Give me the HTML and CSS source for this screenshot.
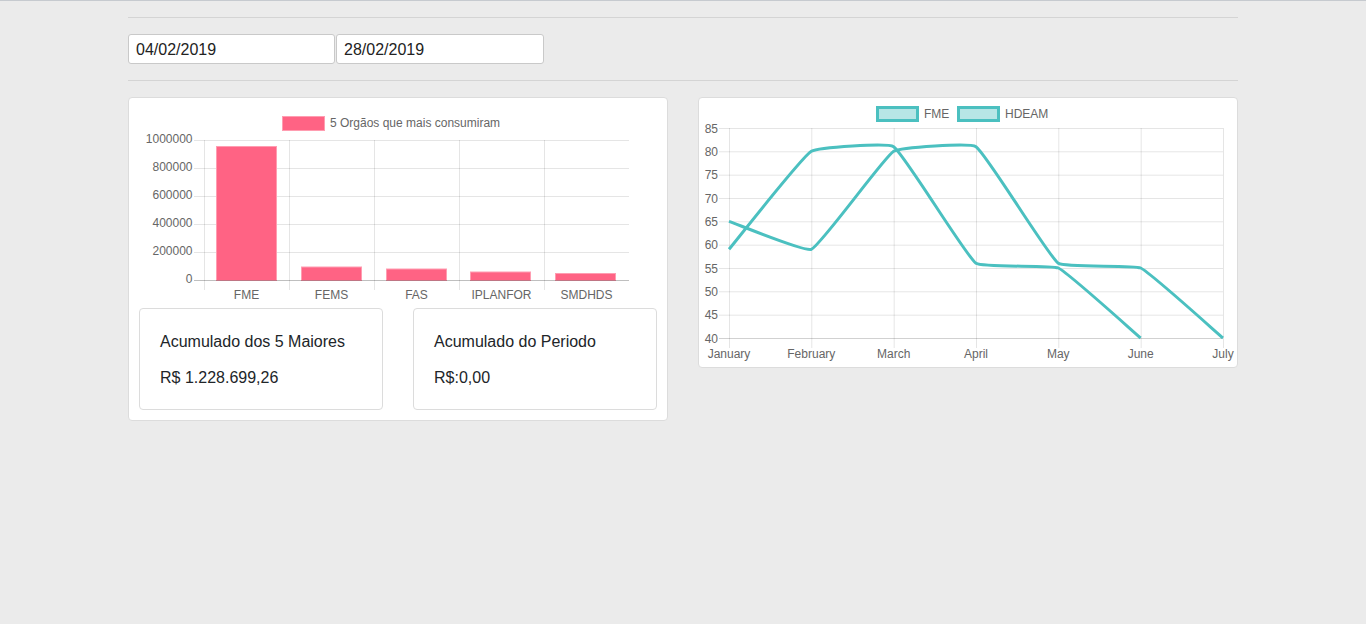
FILE: index.html
```html
<!DOCTYPE html>
<html lang="pt-BR">
<head>
<meta charset="utf-8">
<title>Painel de Consumo</title>
<link rel="stylesheet" href="styles.css">
</head>
<body>
<div class="container">
  <hr class="sep">
  <div class="dates">
    <input class="date-input" type="text" value="04/02/2019">
    <input class="date-input date-input-wide" type="text" value="28/02/2019">
  </div>
  <hr class="sep">
  <div class="row">
    <div class="panel panel-left">
      <svg class="bar-chart" width="518" height="200" viewBox="139 108 518 200" xmlns="http://www.w3.org/2000/svg">
        <rect x="282.5" y="116.5" width="42" height="14" class="bar-legend"/>
        <text x="330" y="123" class="chart-text">5 Orgãos que mais consumiram</text>

        <g class="grid">
          <line x1="194" y1="140.5" x2="629" y2="140.5"/>
          <line x1="194" y1="168.5" x2="629" y2="168.5"/>
          <line x1="194" y1="196.5" x2="629" y2="196.5"/>
          <line x1="194" y1="224.5" x2="629" y2="224.5"/>
          <line x1="194" y1="252.5" x2="629" y2="252.5"/>
          <line x1="204.5" y1="140" x2="204.5" y2="290"/>
          <line x1="289.5" y1="140" x2="289.5" y2="290"/>
          <line x1="374.5" y1="140" x2="374.5" y2="290"/>
          <line x1="459.5" y1="140" x2="459.5" y2="290"/>
          <line x1="544.5" y1="140" x2="544.5" y2="290"/>
        </g>

        <g class="y-labels">
          <text x="192.5" y="138.5" class="chart-text">1000000</text>
          <text x="192.5" y="166.5" class="chart-text">800000</text>
          <text x="192.5" y="194.5" class="chart-text">600000</text>
          <text x="192.5" y="222.5" class="chart-text">400000</text>
          <text x="192.5" y="250.5" class="chart-text">200000</text>
          <text x="192.5" y="279" class="chart-text">0</text>
        </g>

        <g class="bars">
          <rect x="216.5" y="146.5" width="60" height="134"/>
          <rect x="301.5" y="267" width="60" height="13.5"/>
          <rect x="386.5" y="269" width="60" height="11.5"/>
          <rect x="470.5" y="272" width="60" height="8.5"/>
          <rect x="555.5" y="273.5" width="60" height="7"/>
        </g>

        <line x1="194" y1="280.5" x2="629" y2="280.5" class="zero-line"/>

        <g class="x-labels">
          <text x="246.5" y="295" class="chart-text">FME</text>
          <text x="331.5" y="295" class="chart-text">FEMS</text>
          <text x="416.5" y="295" class="chart-text">FAS</text>
          <text x="501.5" y="295" class="chart-text">IPLANFOR</text>
          <text x="586.5" y="295" class="chart-text">SMDHDS</text>
        </g>
      </svg>

      <div class="cards">
        <div class="card">
          <p class="card-title">Acumulado dos 5 Maiores</p>
          <p class="card-value">R$ 1.228.699,26</p>
        </div>
        <div class="card">
          <p class="card-title">Acumulado do Periodo</p>
          <p class="card-value">R$:0,00</p>
        </div>
      </div>
    </div>

    <div class="panel panel-right">
      <svg class="line-chart" width="538" height="269" viewBox="699 98 538 269" xmlns="http://www.w3.org/2000/svg">
        <g transform="translate(698 97)">
          <rect x="179.5" y="10.5" width="40" height="13" class="line-legend"/>
          <text x="226" y="16.5" class="chart-text">FME</text>
          <rect x="260.5" y="10.5" width="40" height="13" class="line-legend"/>
          <text x="307" y="16.5" class="chart-text">HDEAM</text>

          <g class="grid">
            <line x1="21" y1="31.5" x2="525" y2="31.5"/>
            <line x1="21" y1="54.8" x2="525" y2="54.8"/>
            <line x1="21" y1="78.2" x2="525" y2="78.2"/>
            <line x1="21" y1="101.5" x2="525" y2="101.5"/>
            <line x1="21" y1="124.8" x2="525" y2="124.8"/>
            <line x1="21" y1="148.2" x2="525" y2="148.2"/>
            <line x1="21" y1="171.5" x2="525" y2="171.5"/>
            <line x1="21" y1="194.8" x2="525" y2="194.8"/>
            <line x1="21" y1="218.2" x2="525" y2="218.2"/>
            <line x1="31.5" y1="31" x2="31.5" y2="251"/>
            <line x1="113.8" y1="31" x2="113.8" y2="251"/>
            <line x1="196.2" y1="31" x2="196.2" y2="251"/>
            <line x1="278.5" y1="31" x2="278.5" y2="251"/>
            <line x1="360.8" y1="31" x2="360.8" y2="251"/>
            <line x1="443.2" y1="31" x2="443.2" y2="251"/>
            <line x1="525.5" y1="31" x2="525.5" y2="251"/>
          </g>
          <line x1="21" y1="241.5" x2="525" y2="241.5" class="zero-line light"/>

          <g class="y-labels">
            <text x="20" y="31.5" class="chart-text">85</text>
            <text x="20" y="54.8" class="chart-text">80</text>
            <text x="20" y="78.2" class="chart-text">75</text>
            <text x="20" y="101.5" class="chart-text">70</text>
            <text x="20" y="124.8" class="chart-text">65</text>
            <text x="20" y="148.2" class="chart-text">60</text>
            <text x="20" y="171.5" class="chart-text">55</text>
            <text x="20" y="194.8" class="chart-text">50</text>
            <text x="20" y="218.2" class="chart-text">45</text>
            <text x="20" y="241.5" class="chart-text">40</text>
          </g>

          <g class="x-labels">
            <text x="31" y="257" class="chart-text">January</text>
            <text x="113.3" y="257" class="chart-text">February</text>
            <text x="195.7" y="257" class="chart-text">March</text>
            <text x="278" y="257" class="chart-text">April</text>
            <text x="360.3" y="257" class="chart-text">May</text>
            <text x="442.7" y="257" class="chart-text">June</text>
            <text x="525" y="257" class="chart-text">July</text>
          </g>

          <path class="series" d="M31,124.33 C39.23,127.13 106.67,155.16 113.33,152.33 C123.13,148.16 185.65,60.57 195.67,54.33 C202.12,50.31 271.97,45.57 278,49.67 C288.44,56.77 349.89,158.64 360.33,166.33 C366.36,170.77 435.54,167.77 442.67,171 C452.01,175.24 516.77,234 525,241"/>
          <path class="series" d="M31,152.33 C39.23,142.53 103.31,60.57 113.33,54.33 C119.78,50.31 189.64,45.57 195.67,49.67 C206.11,56.77 267.56,158.64 278,166.33 C284.03,170.77 353.2,167.77 360.33,171 C369.67,175.24 434.44,234 442.67,241"/>
        </g>
      </svg>
    </div>
  </div>
</div>
</body>
</html>
```

FILE: styles.css
```css
html, body {
  margin: 0;
}

body {
  background: #ebebeb;
  border-top: 1px solid #c6cacf;
  font-family: "Liberation Sans", Arial, sans-serif;
  color: #212529;
  font-size: 16px;
}

.container {
  width: 1110px;
  margin: 0 auto;
}

.sep {
  margin: 16px 0;
  height: 0;
  border: 0;
  border-top: 1px solid #d4d4d4;
}

.dates {
  display: flex;
  gap: 1px;
}

.date-input {
  width: 207px;
  height: 30px;
  margin: 0;
  box-sizing: border-box;
  padding: 2px 7px 0;
  border: 1px solid #c9c9c9;
  border-radius: 3px;
  background: #fff;
  color: #222;
  font-family: "Liberation Sans", Arial, sans-serif;
  font-size: 16px;
}

.date-input-wide {
  width: 208px;
}

.row {
  display: flex;
  gap: 30px;
  align-items: flex-start;
}

.panel {
  width: 540px;
  box-sizing: border-box;
  background: #fff;
  border: 1px solid #dcdcdc;
  border-radius: 4px;
}

.panel-left {
  padding: 10px;
}

.panel-right {
  padding: 0;
}

.bar-chart,
.line-chart {
  display: block;
}

.chart-text {
  font-family: "Liberation Sans", Arial, sans-serif;
  font-size: 12px;
  fill: #666;
  dominant-baseline: central;
}

.y-labels .chart-text {
  text-anchor: end;
}

.x-labels .chart-text {
  text-anchor: middle;
}

.grid line {
  stroke: rgba(0, 0, 0, 0.1);
  stroke-width: 1;
}

.zero-line {
  stroke: rgba(0, 0, 0, 0.25);
  stroke-width: 1;
}

.zero-line.light {
  stroke: rgba(0, 0, 0, 0.18);
}

.bar-legend {
  fill: #ff6384;
  stroke: #ff9db1;
  stroke-width: 1;
}

.bars rect {
  fill: #ff6384;
  stroke: #ff9db1;
  stroke-width: 1;
}

.line-legend {
  fill: rgba(75, 192, 192, 0.4);
  stroke: #4bc0c0;
  stroke-width: 3;
}

.series {
  fill: none;
  stroke: #4bc0c0;
  stroke-width: 3;
  stroke-linejoin: round;
}

.cards {
  display: flex;
  gap: 30px;
}

.card {
  flex: 1;
  border: 1px solid #dcdcdc;
  border-radius: 4px;
  padding: 21px 20px 19px;
}

.card-title,
.card-value {
  margin: 0;
  line-height: 24px;
  font-size: 16px;
}

.card-value {
  margin-top: 12px;
}
```
